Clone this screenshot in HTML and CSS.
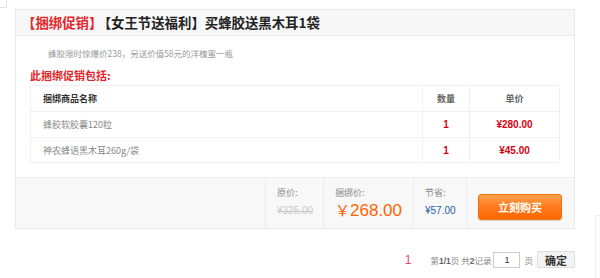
FILE: index.html
```html
<!DOCTYPE html>
<html lang="zh">
<head>
<meta charset="utf-8">
<link rel="stylesheet" href="styles.css">
</head>
<body>
<div class="page">
  <div class="main-col">
    <div class="corner"></div>
    <div class="bundle">
      <div class="bundle-head">
        <span class="tag">【捆绑促销】</span><span class="title">【女王节送福利】买蜂胶送黑木耳1袋</span>
      </div>
      <div class="bundle-body">
        <p class="desc">蜂胶限时惊爆价238，另送价值58元的洋槐蜜一瓶</p>
        <p class="incl">此捆绑促销包括:</p>
        <table class="items">
          <tr class="th">
            <td class="c-name">捆绑商品名称</td>
            <td class="c-qty">数量</td>
            <td class="c-price">单价</td>
          </tr>
          <tr>
            <td class="c-name gray">蜂胶软胶囊120粒</td>
            <td class="c-qty red">1</td>
            <td class="c-price red">¥280.00</td>
          </tr>
          <tr class="last">
            <td class="c-name gray">神农蜂语黑木耳260g/袋</td>
            <td class="c-qty red">1</td>
            <td class="c-price red">¥45.00</td>
          </tr>
        </table>
      </div>
      <div class="bundle-foot">
        <div class="f-cell f-empty"></div>
        <div class="f-cell">
          <div class="f-label">原价:</div>
          <div class="f-old">¥325.00</div>
        </div>
        <div class="f-cell">
          <div class="f-label">捆绑价:</div>
          <div class="f-now"><span class="yen">￥</span>268.00</div>
        </div>
        <div class="f-cell">
          <div class="f-label">节省:</div>
          <div class="f-save">¥57.00</div>
        </div>
        <div class="f-cell f-btn-cell">
          <button class="buy">立刻购买</button>
        </div>
      </div>
    </div>
    <div class="pager">
      <span class="cur">1</span>
      <span class="info">第<b>1/1</b>页 共<b>2</b>记录</span>
      <input class="pg-input" type="text" value="1">
      <span class="info">页</span>
      <button class="ok">确定</button>
    </div>
  </div>
  <div class="side"></div>
</div>
</body>
</html>
```
FILE: styles.css
```css
* { box-sizing: border-box; }
html, body { margin: 0; padding: 0; background: #fff; }
body {
  width: 600px;
  height: 278px;
  overflow: hidden;
  font-family: "Noto Sans CJK SC", "Liberation Sans", sans-serif;
  color: #333;
}
.page { display: flex; align-items: flex-start; }
.main-col { width: 575px; flex: none; }
.corner {
  width: 7px;
  height: 8px;
  border-right: 1px solid #e2e2e2;
  border-bottom: 1px solid #e2e2e2;
}
.bundle {
  margin-top: 1px;
  margin-left: 15px;
  width: 560px;
  border: 1px solid #e9e9e9;
}
.bundle-head {
  height: 26px;
  background: #f7f7f7;
  border-bottom: 1px solid #ececec;
  padding-left: 6px;
  font-size: 13.4px;
  line-height: 25px;
  font-weight: bold;
  white-space: nowrap;
}
.tag { color: #e3262b; margin-right: 2px; }
.title { color: #222; }
.bundle-body { padding: 10px 0 14px 14px; }
.desc {
  margin: 0;
  padding-left: 18px;
  font-size: 8.5px;
  line-height: 14px;
  color: #999;
}
.incl {
  margin: 7px 0 0;
  font-size: 11px;
  line-height: 16px;
  font-weight: bold;
  color: #e3262b;
}
.items {
  margin-top: 2px;
  width: 530px;
  border-collapse: collapse;
  font-size: 9px;
}
.items td {
  border: 1px solid #f0f0f0;
  height: 26px;
  padding: 0;
}
.items tr.last td { height: 25px; }
.c-name { padding-left: 12px !important; }
.c-qty { width: 47px; text-align: center; }
.c-price { width: 90px; text-align: center; }
.th td { font-weight: bold; color: #333; }
.th .c-qty, .th .c-price { color: #666; }
.gray { color: #888; }
.red {
  color: #d7000f;
  font-family: "Liberation Sans", sans-serif;
  font-weight: bold;
  font-size: 10px;
}
.bundle-foot {
  display: grid;
  grid-template-columns: 249px 58px 90px 53px 1fr;
  height: 51px;
  background: #f8f8f8;
  border-top: 1px solid #ededed;
}
.f-cell {
  border-left: 1px solid #ececec;
  padding: 8px 0 0 11px;
}
.f-empty { border-left: none; }
.f-label {
  font-size: 9px;
  line-height: 14px;
  color: #888;
}
.f-old {
  margin-top: 4px;
  font-family: "Liberation Sans", sans-serif;
  font-size: 10px;
  line-height: 14px;
  color: #c8c8c8;
  text-decoration: line-through;
}
.f-now {
  margin-top: -1px;
  font-family: "Liberation Sans", sans-serif;
  font-size: 17px;
  line-height: 22px;
  color: #ff6300;
}
.yen { font-family: "Noto Sans CJK SC", sans-serif; font-size: 15px; }
.f-save {
  margin-top: 4px;
  font-family: "Liberation Sans", sans-serif;
  font-size: 10px;
  line-height: 14px;
  color: #1d5ea6;
}
.f-btn-cell { padding-top: 16px; }
.buy {
  display: block;
  width: 84px;
  height: 26px;
  border: 1px solid #ee7410;
  border-radius: 3px;
  background: linear-gradient(#ffa04c, #ff7a1e 50%, #ff6800);
  color: #fff;
  font-family: "Noto Sans CJK SC", sans-serif;
  font-size: 11px;
  font-weight: bold;
  padding: 0;
  box-shadow: 0 1px 1px rgba(0,0,0,0.15);
}
.pager {
  display: flex;
  justify-content: flex-end;
  align-items: center;
  margin-top: 22px;
  height: 17px;
  font-size: 8.5px;
  color: #888;
}
.cur {
  font-family: "Liberation Sans", sans-serif;
  font-size: 12px;
  color: #e2476a;
  margin-right: 19px;
}
.info b { font-weight: bold; color: #666; font-family: "Liberation Sans", sans-serif; }
.pg-input {
  width: 27px;
  height: 16px;
  margin: 0 4px 0 2px;
  border: 1px solid #ccc;
  padding: 0;
  font-size: 9px;
  text-align: center;
  color: #333;
}
.ok {
  margin-left: 4px;
  width: 38px;
  height: 17px;
  padding: 0;
  border: 1px solid #ddd;
  border-radius: 2px;
  background: #f3f3f3;
  font-family: "Noto Sans CJK SC", sans-serif;
  font-size: 11px;
  font-weight: bold;
  color: #333;
}
.side {
  margin-left: 20px;
  margin-top: 215px;
  flex: 1;
  height: 63px;
  border-left: 1px solid #eee;
  border-top: 1px solid #eee;
}
```
